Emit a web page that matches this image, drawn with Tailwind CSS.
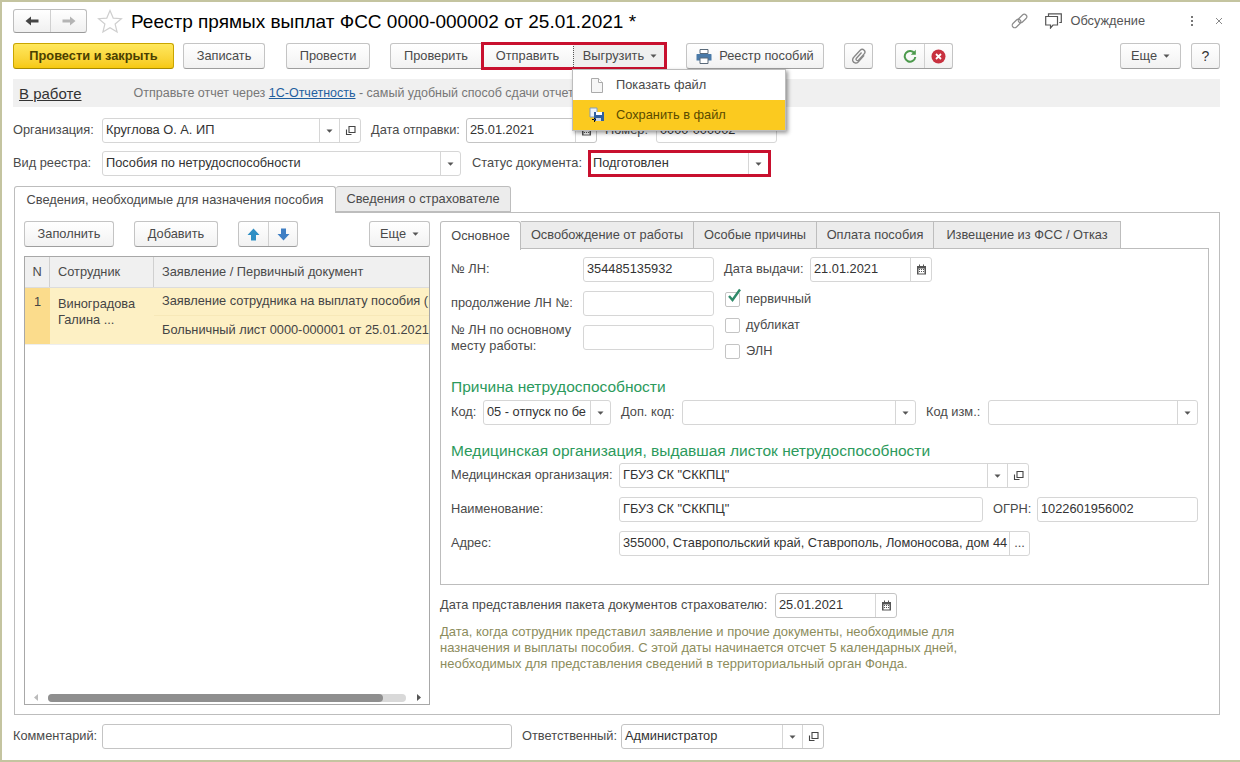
<!DOCTYPE html>
<html lang="ru">
  <head>
    <meta charset="UTF-8" />
    <script src="https://cdn.jsdelivr.net/npm/@tailwindcss/browser@4"></script>
    <title>Реестр прямых выплат ФСС</title>
  </head>
  <body class="bg-white">
    <svg class="hidden">
      <symbol id="tri" viewBox="0 0 7 4"><path d="M0.5 0.5h6L3.5 3.8z" fill="#555" /></symbol>
      <symbol id="open" viewBox="0 0 11 11"><path d="M4 1.500h6v6H4zM1.500 4.500v5h5" fill="none" stroke="#444" stroke-width="1.100" /></symbol>
      <symbol id="cal" viewBox="0 0 11 11"><path d="M1 2h9v8.500H1z" fill="#555" /><path d="M2.500 4.500h6v5h-6z" fill="#fff" /><path d="M3 5h1v1H3zM5 5h1v1H5zM7 5h1v1H7zM3 7h1v1H3zM5 7h1v1H5zM7 7h1v1H7z" fill="#555" /><path d="M3 .5h1v2H3zM7 .5h1v2H7z" fill="#555" /></symbol>
    </svg>

    <div class="relative w-[1240px] h-[762px] overflow-hidden bg-white border-l-2 border-t-2 border-b-2 border-[#c4c4a0] pl-[11px] pr-[20px] font-['Liberation_Sans',Arial,sans-serif] text-[12.800px] leading-none text-[#4a4a4a]">
      <!-- title row -->
      <div class="flex items-center h-[24px] mt-[7px]">
        <div class="flex w-[74px] h-[24px] rounded-[3px] border border-[#bdbdbd] border-b-[#9a9a9a] bg-gradient-to-b from-white to-[#f0f0f0]">
          <div class="flex w-[37px] items-center justify-center border-r border-[#d0d0d0]">
            <svg width="14" height="10" viewBox="0 0 14 10"><path d="M0.5 5L6 0.5V3.5H13.5V6.5H6V9.5z" fill="#444" /></svg>
          </div>
          <div class="flex flex-1 items-center justify-center">
            <svg width="14" height="10" viewBox="0 0 14 10"><path d="M13.5 5L8 0.5V3.5H0.5V6.5H8V9.5z" fill="#b4b4b4" /></svg>
          </div>
        </div>
        <svg class="ml-[10px]" width="26" height="25" viewBox="0 0 26 25"><path d="M13 1.500l3.200 7.600 8.200.6-6.300 5.300 2 8L13 18.700l-7.100 4.300 2-8L1.600 9.700l8.200-.6z" fill="none" stroke="#cfcfcf" stroke-width="1.200" /></svg>
        <div class="ml-[8px] text-[19px] text-black whitespace-nowrap">Реестр прямых выплат ФСС 0000-000002 от 25.01.2021 *</div>
        <svg class="ml-auto" width="17" height="17" viewBox="0 0 17 17"><g fill="none" stroke="#8c8c8c" stroke-width="1.200"><rect x="0.500" y="8" width="10" height="5" rx="2.500" transform="rotate(-45 5.500 10.500)" /><rect x="6.500" y="3" width="10" height="5" rx="2.500" transform="rotate(-45 11.500 5.500)" /></g></svg>
        <svg class="ml-[17px]" width="17" height="16" viewBox="0 0 17 16"><path d="M3.500 3V.8h12.800v8.700h-2M.7 3.500h11.800v8.500H8l-2.500 3v-3H.7z" fill="#fff" stroke="#555" stroke-width="1.200" /></svg>
        <span class="ml-[8px] text-[#555]">Обсуждение</span>
        <div class="ml-[46px] flex flex-col gap-[2px]"><i class="block w-[2px] h-[2px] bg-[#777]"></i><i class="block w-[2px] h-[2px] bg-[#777]"></i><i class="block w-[2px] h-[2px] bg-[#777]"></i></div>
        <svg class="ml-[22px] mr-[-3px]" width="8" height="8" viewBox="0 0 8 8"><path d="M1 1l6 6M7 1l-6 6" stroke="#888" stroke-width="1" /></svg>
      </div>

      <!-- command bar -->
      <div class="flex h-[26px] mt-[10px]">
        <button class="w-[161px] rounded-[3px] border border-[#c9a500] border-b-[#a88a00] bg-gradient-to-b from-[#ffe85c] to-[#f6c90e] font-bold text-[#4a4000]">Провести и закрыть</button>
        <button class="ml-[9px] w-[82px] rounded-[3px] border border-[#c4c4c4] border-b-[#9e9e9e] bg-gradient-to-b from-white to-[#f2f2f2]">Записать</button>
        <button class="ml-[21px] w-[84px] rounded-[3px] border border-[#c4c4c4] border-b-[#9e9e9e] bg-gradient-to-b from-white to-[#f2f2f2]">Провести</button>
        <div class="relative ml-[20px] flex w-[277px]">
          <button class="w-[92px] rounded-l-[3px] border border-[#c4c4c4] border-b-[#9e9e9e] bg-gradient-to-b from-white to-[#f2f2f2]">Проверить</button>
          <button class="w-[91px] border-y border-[#c4c4c4] border-b-[#9e9e9e] bg-gradient-to-b from-white to-[#f2f2f2]">Отправить</button>
          <button class="flex w-[94px] items-center justify-center gap-[6px] border border-dotted border-[#555] bg-[#efefef]">Выгрузить <svg width="7" height="4"><use href="#tri" /></svg></button>
          <div class="absolute left-[91px] top-[-1px] w-[186px] h-[28px] border-[3px] border-[#c8102e]"></div>
        </div>
        <button class="ml-[19px] flex w-[138px] items-center justify-center gap-[7px] rounded-[3px] border border-[#c4c4c4] border-b-[#9e9e9e] bg-gradient-to-b from-white to-[#f2f2f2]">
          <svg width="16" height="15" viewBox="0 0 16 15"><path d="M4 0.500h8v4H4z" fill="#fff" stroke="#5a6a7a" /><path d="M1 5h14a.5.5 0 0 1 .5.5v6H.5v-6A.5.5 0 0 1 1 5z" fill="#4a7aa8" /><path d="M4 9h8v5.500H4z" fill="#fff" stroke="#5a6a7a" /></svg>
          Реестр пособий
        </button>
        <button class="ml-[20px] flex w-[29px] items-center justify-center rounded-[3px] border border-[#c4c4c4] border-b-[#9e9e9e] bg-gradient-to-b from-white to-[#f2f2f2]">
          <svg width="15" height="17" viewBox="0 0 13 15"><path d="M11.500 6.500l-5.500 6c-1.500 1.500-4 .5-4.500-1s0-2.500 1-3.500l5.500-6c1-1 2.500-1 3.500 0s.8 2.300 0 3.200l-5 5.500c-.5.5-1.300.5-1.800 0s-.4-1.200 0-1.700l4.500-5" fill="none" stroke="#888" stroke-width="1.200" /></svg>
        </button>
        <div class="ml-[22px] flex w-[58px] rounded-[3px] border border-[#c4c4c4] border-b-[#9e9e9e] bg-gradient-to-b from-white to-[#f2f2f2]">
          <div class="flex w-[29px] items-center justify-center border-r border-[#d0d0d0]">
            <svg width="14" height="14" viewBox="0 0 14 14"><path d="M11.500 4.500A5.300 5.300 0 1 0 12.300 8" fill="none" stroke="#4c9a4c" stroke-width="2" /><path d="M12.800 .8v5h-5z" fill="#4c9a4c" /></svg>
          </div>
          <div class="flex flex-1 items-center justify-center">
            <svg width="15" height="15" viewBox="0 0 15 15"><circle cx="7.500" cy="7.500" r="7" fill="#c8313f" /><path d="M5 5l5 5M10 5l-5 5" stroke="#fff" stroke-width="1.800" /></svg>
          </div>
        </div>
        <button class="ml-auto flex w-[61px] items-center justify-center gap-[6px] rounded-[3px] border border-[#c4c4c4] border-b-[#9e9e9e] bg-gradient-to-b from-white to-[#f2f2f2]">Еще <svg width="7" height="4"><use href="#tri" /></svg></button>
        <button class="ml-[10px] w-[29px] rounded-[3px] border border-[#c4c4c4] border-b-[#9e9e9e] bg-gradient-to-b from-white to-[#f2f2f2] text-[14px] text-[#333]">?</button>
      </div>

      <!-- info strip -->
      <div class="flex h-[28px] mt-[10px] items-center bg-[#f0f0f0] pl-[6px] whitespace-nowrap">
        <span class="text-[15px] text-[#333] underline">В работе</span>
        <span class="ml-[52px] text-[12.500px] text-[#777]">Отправьте отчет через <span class="text-[#1f5f9f] underline">1С-Отчетность</span> - самый удобный способ сдачи отчетности</span>
      </div>

      <!-- header fields -->
      <div class="flex h-[25px] mt-[11px] items-center">
        <span class="w-[89px]">Организация:</span>
        <div class="flex w-[259px] h-full rounded-[3px] border border-[#d6d6d6]">
          <span class="flex-1 pl-[3px] self-center text-[#333]">Круглова О. А. ИП</span>
          <span class="flex w-[21px] items-center justify-center border-x border-[#d6d6d6]"><svg width="7" height="4"><use href="#tri" /></svg></span>
          <span class="flex w-[20px] items-center justify-center"><svg width="11" height="11"><use href="#open" /></svg></span>
        </div>
        <span class="ml-[10px] w-[95px]">Дата отправки:</span>
        <div class="flex w-[131px] h-full rounded-[3px] border border-[#c4c4c4]">
          <span class="flex-1 pl-[3px] self-center text-[#333]">25.01.2021</span>
          <span class="flex w-[21px] items-center justify-center border-l border-[#d6d6d6]"><svg width="11" height="11"><use href="#cal" /></svg></span>
        </div>
        <span class="ml-[8px] w-[51px]">Номер:</span>
        <div class="flex w-[121px] h-full items-center rounded-[3px] border border-[#d6d6d6] pl-[3px] text-[#333]">0000-000002</div>
      </div>
      <div class="flex h-[25px] mt-[8px] items-center">
        <span class="w-[89px]">Вид реестра:</span>
        <div class="flex w-[359px] h-full rounded-[3px] border border-[#d6d6d6]">
          <span class="flex-1 pl-[3px] self-center text-[#333]">Пособия по нетрудоспособности</span>
          <span class="flex w-[20px] items-center justify-center border-l border-[#d6d6d6]"><svg width="7" height="4"><use href="#tri" /></svg></span>
        </div>
        <span class="ml-[11px] w-[116px]">Статус документа:</span>
        <div class="flex w-[183px] h-[27px] border-[3px] border-[#c8102e]">
          <span class="flex-1 pl-[2px] self-center text-[#333]">Подготовлен</span>
          <span class="flex w-[20px] items-center justify-center border-l border-[#d6d6d6]"><svg width="7" height="4"><use href="#tri" /></svg></span>
        </div>
      </div>

      <!-- main tabs -->
      <div class="flex h-[27px] mt-[10px] ml-[1px]">
        <div class="relative z-10 flex w-[322px] h-[27px] items-center justify-center rounded-t-[3px] border border-b-0 border-[#bdbdbd] bg-white">Сведения, необходимые для назначения пособия</div>
        <div class="flex w-[175px] h-[26px] items-center justify-center rounded-t-[3px] border border-l-0 border-[#bdbdbd] bg-[#ececec]">Сведения о страхователе</div>
      </div>
      <div class="flex h-[503px] mt-[-1px] ml-[1px] border border-[#bdbdbd]">
        <!-- left column -->
        <div class="w-[425px] pl-[9px] pt-[8px] shrink-0">
          <div class="flex h-[26px] w-[406px]">
            <button class="w-[90px] rounded-[3px] border border-[#c4c4c4] border-b-[#9e9e9e] bg-gradient-to-b from-white to-[#f2f2f2]">Заполнить</button>
            <button class="ml-[20px] w-[84px] rounded-[3px] border border-[#c4c4c4] border-b-[#9e9e9e] bg-gradient-to-b from-white to-[#f2f2f2]">Добавить</button>
            <div class="ml-[20px] flex w-[60px] rounded-[3px] border border-[#c4c4c4] border-b-[#9e9e9e] bg-gradient-to-b from-white to-[#f2f2f2]">
              <span class="flex w-[30px] items-center justify-center border-r border-[#d0d0d0]"><svg width="13" height="13" viewBox="0 0 13 13"><path d="M6.500 .5l6 6.500H9v5.500H4V7H.5z" fill="#2f8fc4" /></svg></span>
              <span class="flex flex-1 items-center justify-center"><svg width="13" height="13" viewBox="0 0 13 13"><path d="M6.500 12.500l6-6.500H9V.5H4V6H.5z" fill="#3f7fc4" /></svg></span>
            </div>
            <button class="ml-auto flex w-[61px] items-center justify-center gap-[6px] rounded-[3px] border border-[#c4c4c4] border-b-[#9e9e9e] bg-gradient-to-b from-white to-[#f2f2f2]">Еще <svg width="7" height="4"><use href="#tri" /></svg></button>
          </div>
          <div class="relative mt-[9px] w-[406px] h-[449px] border border-[#a8a8a8] overflow-hidden">
            <div class="flex h-[31px] bg-[#f0f0f0] border-b border-[#dcdcdc]">
              <span class="flex w-[25px] items-center justify-center border-r border-[#d0d0d0]">N</span>
              <span class="flex w-[104px] items-center pl-[8px] border-r border-[#d0d0d0]">Сотрудник</span>
              <span class="flex flex-1 items-center pl-[8px]">Заявление / Первичный документ</span>
            </div>
            <div class="flex h-[57px] border-b border-[#eee] bg-[#fdf0c4] text-[#444]">
              <span class="flex w-[25px] justify-center pt-[8px] bg-[#fbdc8c]">1</span>
              <span class="w-[104px] pl-[8px] pt-[8px] leading-[16px]">Виноградова<br />Галина ...</span>
              <div class="flex-1 min-w-0 whitespace-nowrap">
                <div class="flex h-[28px] items-center pl-[8px] border-b border-[#f7e8b8]">Заявление сотрудника на выплату пособия (</div>
                <div class="flex h-[28px] items-center pl-[8px]">Больничный лист 0000-000001 от 25.01.2021</div>
              </div>
            </div>
            <div class="absolute left-[9px] right-[8px] bottom-[2px] flex items-center h-[9px]">
              <svg width="4" height="7" viewBox="0 0 4 7"><path d="M4 0v7L0 3.500z" fill="#bbb" /></svg>
              <div class="ml-[10px] w-[358px] h-[8px] rounded-full bg-[#d9d9d9]"><div class="w-[335px] h-full rounded-full bg-[#8f8f8f]"></div></div>
              <svg class="ml-auto" width="4" height="7" viewBox="0 0 4 7"><path d="M0 0v7l4-3.500z" fill="#555" /></svg>
            </div>
          </div>
        </div>

        <!-- right column -->
        <div class="flex-1 min-w-0 pt-[8px]">
          <div class="flex h-[28px]">
            <div class="relative z-10 flex w-[81px] h-[29px] items-center justify-center rounded-t-[3px] border border-b-0 border-[#bdbdbd] bg-white">Основное</div>
            <div class="flex w-[173px] items-center justify-center border border-l-0 border-[#bdbdbd] bg-[#ececec]">Освобождение от работы</div>
            <div class="flex w-[123px] items-center justify-center border border-l-0 border-[#bdbdbd] bg-[#ececec]">Особые причины</div>
            <div class="flex w-[117px] items-center justify-center border border-l-0 border-[#bdbdbd] bg-[#ececec]">Оплата пособия</div>
            <div class="flex w-[187px] items-center justify-center border border-l-0 border-[#bdbdbd] bg-[#ececec]">Извещение из ФСС / Отказ</div>
          </div>
          <div class="w-[769px] h-[337px] border border-[#bdbdbd] mt-[-1px] pl-[10px] pt-[8px]">
            <div class="flex items-start">
              <div class="w-[132px] flex flex-col">
                <div class="flex h-[25px] items-center">№ ЛН:</div>
                <div class="flex h-[25px] mt-[9px] items-center">продолжение ЛН №:</div>
                <div class="flex h-[25px] mt-[9px] items-center leading-[16px]">№ ЛН по основному<br />месту работы:</div>
              </div>
              <div class="w-[131px] flex flex-col">
                <div class="flex h-[25px] items-center rounded-[3px] border border-[#d6d6d6] pl-[3px] text-[#333]">354485135932</div>
                <div class="h-[25px] mt-[9px] rounded-[3px] border border-[#d6d6d6]"></div>
                <div class="h-[25px] mt-[9px] rounded-[3px] border border-[#d6d6d6]"></div>
              </div>
              <div class="ml-[10px] flex flex-col">
                <div class="flex h-[25px] items-center">
                  <span class="w-[86px]">Дата выдачи:</span>
                  <div class="flex w-[122px] h-full rounded-[3px] border border-[#d6d6d6]">
                    <span class="flex-1 pl-[3px] self-center text-[#333]">21.01.2021</span>
                    <span class="flex w-[21px] items-center justify-center border-l border-[#d6d6d6]"><svg width="11" height="11"><use href="#cal" /></svg></span>
                  </div>
                </div>
                <div class="relative flex items-center h-[16px] mt-[9px] ml-[1px]">
                  <span class="w-[15px] h-[15px] rounded-[2px] border border-[#c4c4c4]"></span>
                  <svg class="absolute left-[2px] top-[-3px]" width="15" height="15" viewBox="0 0 15 15"><path d="M2 8l3.500 4L13 1.500" fill="none" stroke="#2f8a6a" stroke-width="2.400" /></svg>
                  <span class="ml-[6px]">первичный</span>
                </div>
                <div class="flex items-center h-[16px] mt-[10px] ml-[1px]">
                  <span class="w-[15px] h-[15px] rounded-[2px] border border-[#c4c4c4]"></span>
                  <span class="ml-[6px]">дубликат</span>
                </div>
                <div class="flex items-center h-[16px] mt-[10px] ml-[1px]">
                  <span class="w-[15px] h-[15px] rounded-[2px] border border-[#c4c4c4]"></span>
                  <span class="ml-[6px]">ЭЛН</span>
                </div>
              </div>
            </div>

            <div class="mt-[20px] text-[15.500px] leading-[16px] text-[#2c9a5c]">Причина нетрудоспособности</div>
            <div class="flex h-[25px] mt-[5px] items-center">
              <span class="w-[32px]">Код:</span>
              <div class="flex w-[128px] h-full rounded-[3px] border border-[#d6d6d6]">
                <span class="flex-1 min-w-0 overflow-hidden whitespace-nowrap pl-[3px] self-center text-[#333]">05 - отпуск по бе</span>
                <span class="flex w-[20px] shrink-0 items-center justify-center border-l border-[#d6d6d6]"><svg width="7" height="4"><use href="#tri" /></svg></span>
              </div>
              <span class="ml-[10px] w-[61px]">Доп. код:</span>
              <div class="flex w-[234px] h-full justify-end rounded-[3px] border border-[#d6d6d6]">
                <span class="flex w-[20px] items-center justify-center border-l border-[#d6d6d6]"><svg width="7" height="4"><use href="#tri" /></svg></span>
              </div>
              <span class="ml-[10px] w-[62px]">Код изм.:</span>
              <div class="flex w-[210px] h-full justify-end rounded-[3px] border border-[#d6d6d6]">
                <span class="flex w-[20px] items-center justify-center border-l border-[#d6d6d6]"><svg width="7" height="4"><use href="#tri" /></svg></span>
              </div>
            </div>

            <div class="mt-[18px] text-[15.500px] leading-[16px] text-[#2c9a5c]">Медицинская организация, выдавшая листок нетрудоспособности</div>
            <div class="flex h-[25px] mt-[4px] items-center">
              <span class="w-[168px]">Медицинская организация:</span>
              <div class="flex w-[410px] h-full rounded-[3px] border border-[#d6d6d6]">
                <span class="flex-1 pl-[3px] self-center text-[#333]">ГБУЗ СК "СККПЦ"</span>
                <span class="flex w-[21px] items-center justify-center border-x border-[#d6d6d6]"><svg width="7" height="4"><use href="#tri" /></svg></span>
                <span class="flex w-[20px] items-center justify-center"><svg width="11" height="11"><use href="#open" /></svg></span>
              </div>
            </div>
            <div class="flex h-[25px] mt-[9px] items-center">
              <span class="w-[168px]">Наименование:</span>
              <div class="flex w-[364px] h-full items-center rounded-[3px] border border-[#d6d6d6] pl-[3px] text-[#333]">ГБУЗ СК "СККПЦ"</div>
              <span class="ml-[10px] w-[44px]">ОГРН:</span>
              <div class="flex w-[161px] h-full items-center rounded-[3px] border border-[#d6d6d6] pl-[3px] text-[#333]">1022601956002</div>
            </div>
            <div class="flex h-[25px] mt-[9px] items-center">
              <span class="w-[168px]">Адрес:</span>
              <div class="flex w-[411px] h-full rounded-[3px] border border-[#d6d6d6]">
                <span class="flex-1 min-w-0 overflow-hidden whitespace-nowrap pl-[3px] self-center text-[#333]">355000, Ставропольский край, Ставрополь, Ломоносова, дом 44</span>
                <span class="flex w-[20px] shrink-0 items-center justify-center border-l border-[#d6d6d6]">...</span>
              </div>
            </div>
          </div>

          <div class="flex h-[25px] mt-[8px] items-center">
            <span class="w-[335px]">Дата представления пакета документов страхователю:</span>
            <div class="flex w-[122px] h-full rounded-[3px] border border-[#c4c4c4]">
              <span class="flex-1 pl-[3px] self-center text-[#333]">25.01.2021</span>
              <span class="flex w-[21px] items-center justify-center border-l border-[#d6d6d6]"><svg width="11" height="11"><use href="#cal" /></svg></span>
            </div>
          </div>
          <p class="mt-[6px] w-[530px] text-[13px] leading-[16px] text-[#8c8c5c]">Дата, когда сотрудник представил заявление и прочие документы, необходимые для назначения и выплаты пособия. С этой даты начинается отсчет 5 календарных дней, необходимых для представления сведений в территориальный орган Фонда.</p>
        </div>
      </div>

      <!-- footer -->
      <div class="flex h-[25px] mt-[9px] items-center">
        <span class="w-[89px]">Комментарий:</span>
        <div class="w-[410px] h-full rounded-[3px] border border-[#c4c4c4]"></div>
        <span class="ml-[10px] w-[99px]">Ответственный:</span>
        <div class="flex w-[203px] h-full rounded-[3px] border border-[#c4c4c4]">
          <span class="flex-1 pl-[3px] self-center text-[#333]">Администратор</span>
          <span class="flex w-[21px] items-center justify-center border-x border-[#d6d6d6]"><svg width="7" height="4"><use href="#tri" /></svg></span>
          <span class="flex w-[20px] items-center justify-center"><svg width="11" height="11"><use href="#open" /></svg></span>
        </div>
      </div>

      <!-- dropdown menu over the form -->
      <div class="absolute left-[570px] top-[67px] z-20 w-[214px] h-[62px] border border-[#bdbdbd] bg-white shadow-[2px_2px_4px_rgba(0,0,0,0.4)]">
        <div class="flex h-[30px] items-center pl-[18px]">
          <svg width="12" height="15" viewBox="0 0 12 15"><path d="M.5.5h7l4 4v10H.5z" fill="#f6f6f6" stroke="#aaa" /><path d="M7.500.5v4h4" fill="#fff" stroke="#aaa" /></svg>
          <span class="ml-[13px]">Показать файл</span>
        </div>
        <div class="flex h-[30px] items-center pl-[16px] bg-[#fbca1f] text-[#5a4a00]">
          <svg width="16" height="16" viewBox="0 0 16 16"><path d="M1 1h7v9H1z" fill="#eef3f8" stroke="#7f9cc0" /><path d="M5 5h10v9H5z" fill="#2f5f9f" /><path d="M7 5h6v3H7z" fill="#fff" /><path d="M7 11h5v3H7z" fill="#cfd8e2" /><path d="M3 12h4v1H3zM5 11v4h1v-4z" fill="#111" /></svg>
          <span class="ml-[11px]">Сохранить в файл</span>
        </div>
      </div>
    </div>
  </body>
</html>
